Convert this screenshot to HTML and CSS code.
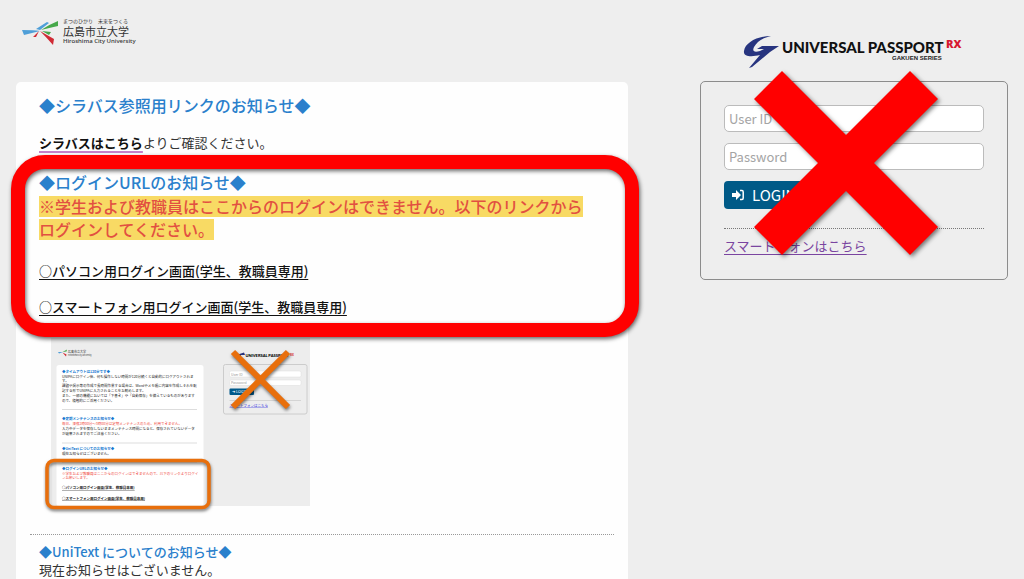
FILE: index.html
```html
<!DOCTYPE html>
<html lang="ja">
<head>
<meta charset="utf-8">
<title>UNIVERSAL PASSPORT RX</title>
<link rel="stylesheet" href="styles.css">
</head>
<body>
<div class="page">
  <main class="main">
    <header class="site-header">
      <svg class="school-logo" viewBox="0 0 114 30" role="img" aria-label="広島市立大学">
        <path fill="#4f9fd8" d="M0 11 Q12 11 18 12 L2 16Z M14 10 L25 3 L27 4 L18 11Z"/>
        <path fill="#46a84a" d="M19 11 Q26 6 36 2 L36 7 Q27 9 19 11Z M20 12 L29 13 L27 16Z"/>
        <path fill="#d02b35" d="M18 12 Q25 16 32 20 L31 26 Q25 19 18 12Z M17 12 L14 18 L11 18Z"/>
        <text class="school-motto" x="41" y="4">まつのひかり　未来をつくる</text>
        <text class="school-name" x="41" y="17">広島市立大学</text>
        <text class="school-latin" x="41" y="24">Hiroshima City University</text>
      </svg>
    </header>
    <div class="card">
      <section class="notice">
        <h2 class="notice-title">◆シラバス参照用リンクのお知らせ◆</h2>
        <p class="syllabus"><a class="syllabus-link" href="#">シラバスはこちら</a>よりご確認ください。</p>
      </section>
      <section class="notice notice-framed">
        <h2 class="notice-title">◆ログインURLのお知らせ◆</h2>
        <p class="warning"><mark class="warning-mark">※学生および教職員はここからのログインはできません。以下のリンクから</mark><mark class="warning-mark">ログインしてください。</mark></p>
        <p class="login-link"><a href="#">○パソコン用ログイン画面(学生、教職員専用)</a></p>
        <p class="login-link"><a href="#">○スマートフォン用ログイン画面(学生、教職員専用)</a></p>
        <div class="frame"></div>
      </section>
      <svg class="preview" viewBox="0 0 544 354" role="img" aria-label="ログイン画面の見本">
        <rect x="16" y="0" width="518" height="336" fill="#ededed"/>
        <rect x="27" y="54" width="294" height="282" rx="5" fill="#fff"/>
        <path fill="#4f9fd8" d="M30 28 L40 28 L32 31Z"/>
        <path fill="#46a84a" d="M39 28 L48 23 L47 27Z"/>
        <path fill="#d02b35" d="M39 29 L47 33 L46 37Z"/>
        <text class="mini-logo" x="50" y="30">広島市立大学</text>
        <text class="mini-latin" x="50" y="35">Hiroshima City University</text>
        <g class="mini-text">
          <text class="mini-blue" x="38" y="69">◆タイムアウトは120分です◆</text>
          <text x="38" y="79">UNIPAにログイン後、何も操作しない時間が120分続くと自動的にログアウトされま</text>
          <text x="38" y="88">す。</text>
          <text x="38" y="98">課題や掲示等の作成で長時間作業する場合は、Wordやメモ帳に内容を作成しそれを転</text>
          <text x="38" y="107">記する形でUNIPAに入力されることをお勧めします。</text>
          <text x="38" y="118">また、一部の機能においては「下書き」や「自動保存」を備えているものがあります</text>
          <text x="38" y="127">ので、積極的にご活用ください。</text>
          <text class="mini-blue" x="38" y="164">◆定期メンテナンスのお知らせ◆</text>
          <text class="mini-red" x="38" y="173">毎日、深夜2時00分〜3時00分は定期メンテナンスのため、利用できません。</text>
          <text x="38" y="183">入力中データを保存しないままメンテナンス時間になると、保存されていないデータ</text>
          <text x="38" y="194">が破棄されますのでご注意ください。</text>
          <text class="mini-blue" x="38" y="223">◆UniText についてのお知らせ◆</text>
          <text x="38" y="233">現在お知らせはございません。</text>
          <text class="mini-blue" x="38" y="263">◆ログインURLのお知らせ◆</text>
          <text class="mini-red" x="38" y="273">※学生および教職員はここからのログインはできませんので、以下のリンクよりログイ</text>
          <text class="mini-red" x="38" y="282">ンお願いします。</text>
          <text class="mini-link" x="38" y="302">○パソコン用ログイン画面(学生、教職員専用)</text>
          <text class="mini-link" x="38" y="323">○スマートフォン用ログイン画面(学生、教職員専用)</text>
        </g>
        <path stroke="#ddd" stroke-width="2" d="M38 143H308M38 210H308M38 248H308"/>
        <path fill="#27347f" d="M402 29 L390 33 L390 37 L394 41 L396 34 L404 34Z"/>
        <text class="mini-brand" x="405" y="38">UNIVERSAL PASSPORT</text>
        <text class="mini-rx" x="494" y="35">RX</text>
        <rect x="361" y="53" width="167" height="99" rx="4" fill="none" stroke="#ccc" stroke-width="2"/>
        <rect x="373" y="66" width="143" height="12" rx="3" fill="#fff" stroke="#ddd"/>
        <rect x="373" y="84" width="143" height="11" rx="3" fill="#fff" stroke="#ddd"/>
        <text class="mini-label" x="376" y="75">User ID</text>
        <text class="mini-label" x="376" y="92">Password</text>
        <rect x="373" y="101" width="49" height="13" rx="2" fill="#00598a"/>
        <text class="mini-button" x="378" y="110">➜ LOGIN</text>
        <path stroke="#bbb" d="M373 125H516"/>
        <text class="mini-phone" x="373" y="137">スマートフォンはこちら</text>
        <g class="mini-mark">
          <rect x="8" y="245" width="324" height="94" rx="14" stroke-width="7"/>
          <path stroke-width="12" d="M380 28 L490 138 M490 28 L380 138"/>
        </g>
      </svg>
      <section class="notice notice-ruled">
        <h2 class="notice-subtitle">◆UniText についてのお知らせ◆</h2>
        <p class="notice-body">現在お知らせはございません。</p>
      </section>
    </div>
  </main>
  <aside class="side">
    <svg class="brand" viewBox="0 0 224 34" role="img" aria-label="UNIVERSAL PASSPORT RX GAKUEN SERIES">
      <path fill="#27347f" d="M29 1 C15 1 3 8 2 16 C1 22 10 22 18 20 L7 33 L10 32 L28 17 L37 11 L20 11 L15 14 L22 14 L18 16 C12 18 10 16 12 12 C15 7 20 3 29 1Z"/>
      <text class="brand-name" x="40" y="18">UNIVERSAL PASSPORT</text>
      <text class="brand-rx" x="204" y="13">RX</text>
      <text class="brand-series" x="150" y="25">GAKUEN SERIES</text>
    </svg>
    <form class="login">
      <input class="field" type="text" placeholder="User ID" aria-label="User ID">
      <input class="field" type="password" placeholder="Password" aria-label="Password">
      <button class="login-button" type="button">
        <svg class="login-icon" viewBox="0 0 12 12" aria-hidden="true">
          <path fill="#fff" d="M0 4H4V1L9 6L4 11V8H0Z"/>
          <path fill="none" stroke="#fff" stroke-width="1.5" d="M8 1.5H10Q11.2 1.5 11.2 3V9Q11.2 10.5 10 10.5H8"/>
        </svg>
        LOGIN
      </button>
      <div class="phone"><a class="phone-link" href="#">スマートフォンはこちら</a></div>
      <svg class="cross" viewBox="0 0 184 184" aria-hidden="true">
        <path fill="#f00" d="M28 0 L92 64 L156 0 L184 28 L120 92 L184 156 L156 184 L92 120 L28 184 L0 156 L64 92 L0 28Z"/>
      </svg>
    </form>
  </aside>
</div>
</body>
</html>
```
FILE: styles.css
```css
* {
  box-sizing: border-box;
}

html {
  background: #eee;
}

body {
  margin: 0;
  background: #eee;
  color: #333;
  font-family: "Noto Sans CJK JP", sans-serif;
  font-size: 13px;
  line-height: 18px;
}

h2,
p {
  margin: 0;
}

.page {
  display: grid;
  grid-template-columns: 612fr 308fr;
  column-gap: 72px;
  height: 100vh;
  padding: 0 16px;
  overflow: hidden;
}

.main {
  display: flex;
  flex-direction: column;
}

.site-header {
  height: 82px;
  padding: 19px 6px 0;
}

.school-logo {
  display: block;
  width: 114px;
  height: 30px;
  overflow: visible;
}

.school-logo text {
  fill: #333;
}

.school-motto {
  font-size: 5px;
}

.school-name {
  font-size: 11px;
}

.school-latin {
  font-family: "Noto Sans", sans-serif;
  font-size: 6px;
  font-weight: 500;
}

.card {
  flex: 1;
  padding: 11px 14px;
  border-radius: 5px 5px 0 0;
  background: #fefefe;
}

.notice {
  padding: 0 9px;
}

.notice-title {
  color: #2a80cc;
  font-size: 16px;
  font-weight: 500;
  line-height: 24px;
}

.syllabus {
  margin-top: 17px;
}

.syllabus-link {
  color: #111;
  font-weight: 700;
  text-decoration: underline 2px #c57fca;
  text-decoration-skip-ink: none;
  text-underline-offset: 3px;
}

.notice-framed {
  position: relative;
  margin-top: 18px;
}

.warning {
  display: flex;
  flex-direction: column;
  align-items: flex-start;
  gap: 2px;
  padding-top: 2px;
  font-size: 16px;
  line-height: 21px;
}

.warning-mark {
  background: #f8da64;
  color: #e25041;
  font-weight: 500;
}

.login-link {
  margin-top: 18px;
}

.warning + .login-link {
  margin-top: 22px;
}

.login-link a {
  color: #111;
  font-weight: 500;
  text-underline-offset: 3px;
}

.frame {
  position: absolute;
  inset: -15px -25px -21px -19px;
  border: 14px solid #f00;
  border-radius: 34px;
  filter: drop-shadow(1px 2px 2px rgba(0, 0, 0, 0.6));
  pointer-events: none;
}

.preview {
  display: block;
  width: 272px;
  height: 177px;
  margin: 22px 0 0 13px;
}

.mini-text {
  fill: #222;
  font-size: 7px;
}

.mini-logo {
  fill: #333;
  font-size: 6px;
}

.mini-latin {
  fill: #333;
  font-size: 4px;
}

.mini-blue {
  fill: #1478d0;
  font-weight: 700;
}

.mini-red {
  fill: #f0483e;
}

.mini-link {
  font-weight: 700;
  text-decoration: underline;
}

.mini-brand {
  font-family: Lato, sans-serif;
  font-size: 8px;
  font-weight: 900;
}

.mini-rx {
  fill: #d71920;
  font-size: 6px;
  font-weight: 700;
}

.mini-label {
  fill: #999;
  font-size: 7px;
}

.mini-button {
  fill: #fff;
  font-size: 8px;
}

.mini-phone {
  fill: #3030e0;
  font-size: 7px;
  text-decoration: underline;
}

.mini-mark {
  fill: none;
  stroke: #e86f0c;
  filter: drop-shadow(1px 4px 3px rgba(0, 0, 0, 0.5));
}

.notice-ruled {
  margin-top: 19px;
  padding-top: 8px;
  border-top: 1px dotted #999;
}

.notice-subtitle {
  color: #2a80cc;
  font-size: 13px;
  font-weight: 500;
}

.side {
  display: flex;
  flex-direction: column;
}

.brand {
  align-self: center;
  width: 224px;
  height: 34px;
  margin: 35px 0 12px;
}

.brand-name {
  fill: #111;
  font-family: Lato, sans-serif;
  font-size: 15px;
  font-weight: 900;
}

.brand-rx {
  fill: #d71930;
  font-family: "Open Sans", sans-serif;
  font-size: 11px;
  font-weight: 800;
}

.brand-series {
  fill: #222;
  font-family: "Liberation Sans", sans-serif;
  font-size: 6px;
  font-weight: 700;
}

.login {
  position: relative;
  display: flex;
  flex-direction: column;
  align-items: flex-start;
  padding: 23px 23px 24px;
  border: 1px solid #8c8c8c;
  border-radius: 5px;
}

.field {
  width: 100%;
  height: 27px;
  margin-bottom: 11px;
  padding: 0 4px;
  border: 1px solid #bbb;
  border-radius: 5px;
  background: #fff;
  color: #333;
  font: inherit;
}

.field::placeholder {
  color: #a4a4a4;
}

.login-button {
  display: flex;
  align-items: center;
  gap: 8px;
  height: 28px;
  padding: 0 8px;
  border: 0;
  border-radius: 4px;
  background: #005a87;
  color: #fff;
  font: inherit;
  font-size: 15px;
}

.login-icon {
  width: 12px;
  height: 12px;
}

.phone {
  width: 100%;
  margin-top: 19px;
  padding-top: 8px;
  border-top: 1px dotted #777;
}

.phone-link {
  color: #7a45a0;
  text-underline-offset: 3px;
}

.cross {
  position: absolute;
  top: -11px;
  left: 53px;
  width: 184px;
  height: 184px;
  overflow: visible;
  filter: drop-shadow(2px 2px 2px rgba(0, 0, 0, 0.5));
  pointer-events: none;
}
```
